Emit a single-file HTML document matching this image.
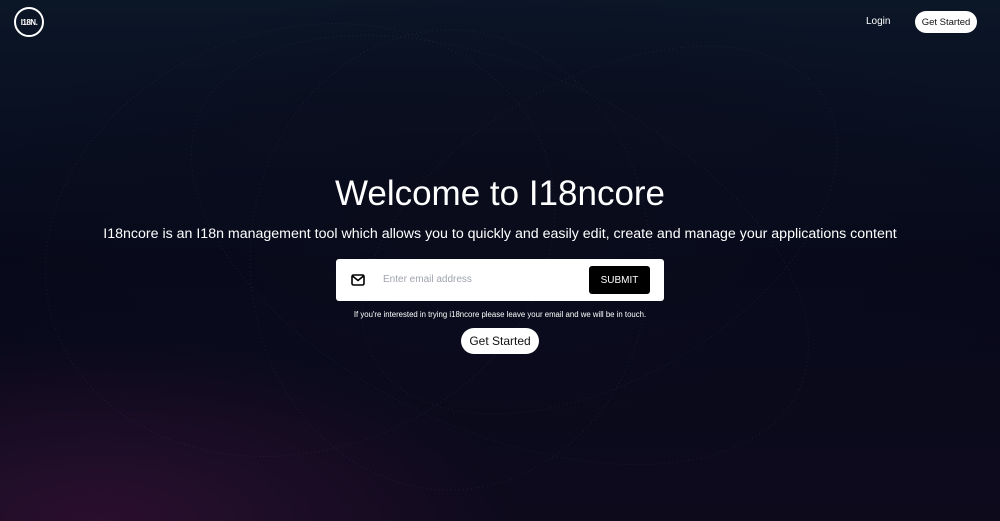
<!DOCTYPE html>
<html><head><meta charset="utf-8"><style>
*{margin:0;padding:0;box-sizing:border-box}
html,body{width:1000px;height:521px;overflow:hidden}
body{font-family:"Liberation Sans",sans-serif;color:#fff;
background:radial-gradient(ellipse 60% 50% at 10% 100%,#2a0f2e 0%,transparent 70%),radial-gradient(ellipse 70% 60% at 50% 45%,#0a0c1c 0%,transparent 80%),linear-gradient(180deg,#0b1627 0%,#07091a 50%,#0d0a1c 100%);position:relative}
.logo{position:absolute;left:14px;top:7px;width:30px;height:30px;border:2px solid #fff;border-radius:50%;font-size:8px;font-weight:bold;display:flex;align-items:center;justify-content:center;letter-spacing:-0.5px}
.login{position:absolute;left:866px;top:16px;font-size:10px}
.gs{position:absolute;left:915px;top:11px;width:62px;height:22px;background:#fff;color:#111;border-radius:11px;font-size:9.5px;display:flex;align-items:center;justify-content:center}
h1{position:absolute;top:174px;width:100%;text-align:center;font-weight:normal;font-size:35px;line-height:40px}
.sub{position:absolute;top:225px;width:100%;text-align:center;font-size:14.2px;line-height:18px}
.box{position:absolute;left:336px;top:259px;width:328px;height:42px;background:#fff;border-radius:3px}
.box .ph{position:absolute;left:47px;top:15px;font-size:10px;color:#a0a4ae}
.box .btn{position:absolute;left:253px;top:7px;width:61px;height:28px;background:#000;border-radius:3px;font-size:10px;display:flex;align-items:center;justify-content:center}
.note{position:absolute;top:310px;width:100%;text-align:center;font-size:7.8px}
.gs2{position:absolute;left:461px;top:328px;width:78px;height:26px;background:#fff;color:#111;border-radius:13px;font-size:12px;display:flex;align-items:center;justify-content:center}
svg.bg{position:absolute;left:0;top:0}
</style></head><body>
<svg class="bg" width="1000" height="521"><g fill="none" stroke="#8a9bb0" stroke-opacity="0.12" stroke-dasharray="1 3">
<ellipse cx="300" cy="240" rx="260" ry="210" transform="rotate(-20 300 240)"/>
<ellipse cx="500" cy="250" rx="330" ry="180" transform="rotate(25 500 250)"/>
<ellipse cx="450" cy="260" rx="200" ry="230"/>
<ellipse cx="600" cy="230" rx="260" ry="150" transform="rotate(-30 600 230)"/>
</g></svg>
<div class="logo">I18N.</div>
<div class="login">Login</div>
<div class="gs">Get Started</div>
<h1>Welcome to I18ncore</h1>
<div class="sub">I18ncore is an I18n management tool which allows you to quickly and easily edit, create and manage your applications content</div>
<div class="box">
<svg style="position:absolute;left:15px;top:15px" width="14" height="12" viewBox="0 0 14 12"><rect x="1" y="1" width="12" height="10" rx="1.5" fill="none" stroke="#000" stroke-width="1.6"/><path d="M1.5 2 L7 6.5 L12.5 2" fill="none" stroke="#000" stroke-width="1.6"/></svg>
<div class="ph">Enter email address</div>
<div class="btn">SUBMIT</div>
</div>
<div class="note">If you're interested in trying i18ncore please leave your email and we will be in touch.</div>
<div class="gs2">Get Started</div>
</body></html>
